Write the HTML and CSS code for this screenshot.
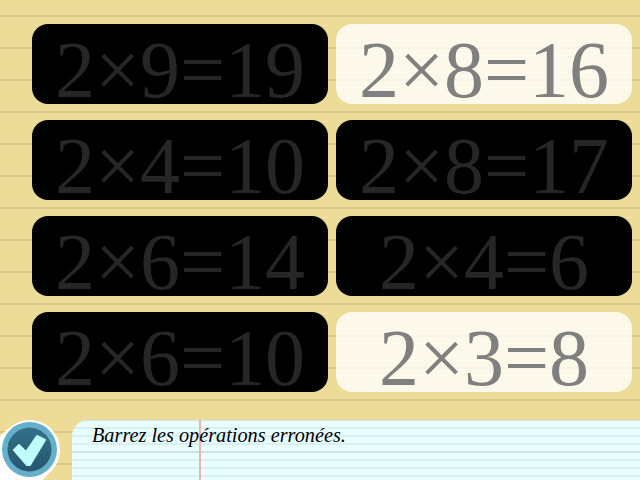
FILE: index.html
```html
<!DOCTYPE html>
<html lang="fr">
<head>
    <meta charset="UTF-8">
    <title>Barrez les opérations erronées</title>
    <link rel="stylesheet" href="styles.css">
</head>
<body>
    <div class="page">
        <div class="grid">
            <div class="cell dark">2×9=19</div>
            <div class="cell light">2×8=16</div>
            <div class="cell dark">2×4=10</div>
            <div class="cell dark">2×8=17</div>
            <div class="cell dark">2×6=14</div>
            <div class="cell dark">2×4=6</div>
            <div class="cell dark">2×6=10</div>
            <div class="cell light">2×3=8</div>
        </div>
        <div class="footer">
            <div class="check">
                <svg width="60" height="60" viewBox="0 0 60 60">
                    <defs>
                        <linearGradient id="disc" x1="0" y1="0" x2="0" y2="1">
                            <stop offset="0" stop-color="#347089"/>
                            <stop offset="1" stop-color="#27556f"/>
                        </linearGradient>
                    </defs>
                    <circle cx="30" cy="30" r="30" fill="#fff"/>
                    <path d="M0 16 L9 8 L55 46 L43 60 L0 60 Z" fill="#fff"/>
                    <circle cx="29.5" cy="29.5" r="27.5" fill="#65afca"/>
                    <circle cx="29.5" cy="29.5" r="22" fill="url(#disc)"/>
                    <path d="M14 30 L19 25 L26 32 L37 16 L45 20 L30 45 L27 45 Z" fill="#c0fbfb" stroke="#c0fbfb" stroke-width="2" stroke-linejoin="round"/>
                </svg>
            </div>
            <div class="sheet">Barrez les opérations erronées.</div>
        </div>
    </div>
</body>
</html>
```

FILE: styles.css
```css
html, body {
    margin: 0;
    padding: 0;
}
.page {
    width: 640px;
    height: 480px;
    overflow: hidden;
    display: flex;
    flex-direction: column;
    background-color: #eddb98;
    background-image: linear-gradient(to bottom, transparent 15px, #d9c486 15px, #d9c486 17px, transparent 17px);
    background-size: 100% 32px;
}
.grid {
    display: grid;
    grid-template-columns: 296px 296px;
    grid-auto-rows: 80px;
    column-gap: 8px;
    row-gap: 16px;
    padding: 24px 8px 0 32px;
}
.cell {
    box-sizing: border-box;
    height: 80px;
    padding-top: 6px;
    border-radius: 16px;
    text-align: center;
    font-family: "Liberation Serif", serif;
    font-size: 80px;
    line-height: 80px;
}
.dark {
    background-color: #000;
    color: #262626;
}
.light {
    background-color: rgba(255, 255, 255, 0.8);
    color: #808080;
}
.footer {
    display: flex;
    margin-top: 28px;
    height: 60px;
}
.check {
    width: 60px;
    height: 60px;
    margin-right: 12px;
}
.sheet {
    flex: 1;
    border-top-left-radius: 16px;
    padding: 3px 0 0 20px;
    font-family: "Liberation Serif", serif;
    font-style: italic;
    font-size: 20.25px;
    line-height: 24px;
    color: #000;
    background-color: #e9ffff;
    background-image:
        linear-gradient(to right, transparent 127px, #efb3b3 127px, #efb3b3 129px, transparent 129px),
        linear-gradient(to bottom, transparent 30px, #cfe4e6 30px, #cfe4e6 32px),
        linear-gradient(to bottom, transparent 6px, #d6f0f3 6px, #d6f0f3 8px);
    background-size: 100% 100%, 100% 32px, 100% 8px;
    background-position: 0 0, 0 1px, 0 1px;
}
```
